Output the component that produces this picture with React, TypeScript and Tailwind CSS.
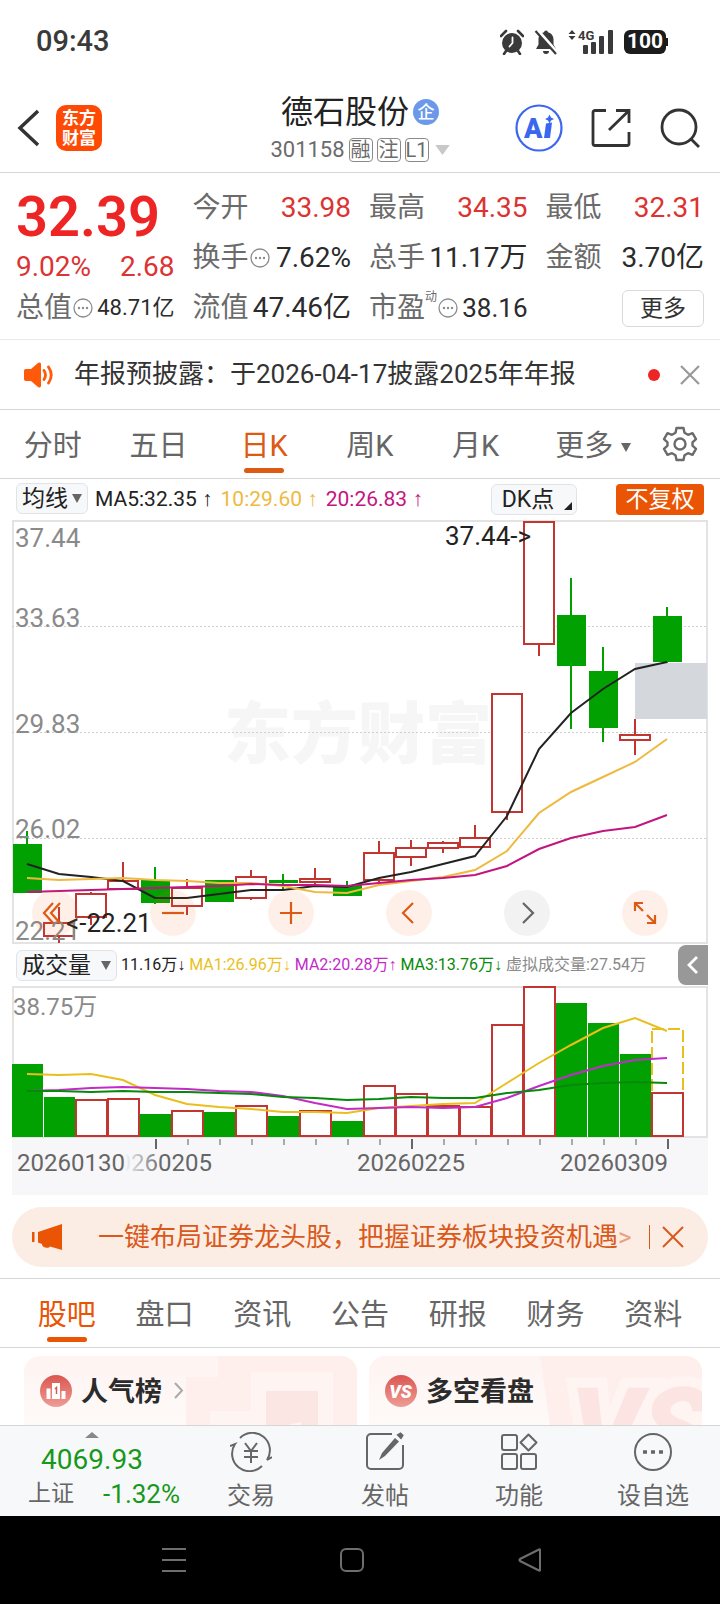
import { useState } from 'react'
import type { ReactNode } from 'react'
import clsx from 'clsx'

type Candle = { up: boolean; top: number; bottom: number; high: number; low: number }

const c = (up: boolean, top: number, bottom: number, high: number, low: number): Candle => ({
  up,
  top,
  bottom,
  high,
  low
})

const STEP = 32
const cx = (i: number) => 15 + STEP * i

const candles: Candle[] = [
  c(false, 325, 372, 311, 372),
  c(true, 403, 416, 387, 423),
  c(true, 374, 397, 372, 405),
  c(true, 361, 369, 342, 369),
  c(false, 361, 382, 347, 384),
  c(true, 368, 386, 359, 395),
  c(false, 361, 381, 361, 382),
  c(true, 357, 378, 350, 380),
  c(false, 361, 362, 354, 370),
  c(true, 359, 362, 348, 365),
  c(false, 366, 375, 361, 376),
  c(true, 333, 360, 321, 362),
  c(true, 328, 337, 320, 346),
  c(true, 323, 328, 321, 333),
  c(true, 318, 327, 305, 327),
  c(true, 174, 292, 174, 300),
  c(true, 2, 124, 2, 136),
  c(false, 96, 145, 58, 209),
  c(false, 152, 207, 127, 222),
  c(true, 215, 220, 199, 235),
  c(false, 97, 141, 87, 143)
]

const priceLines = [
  { color: '#222222', ys: [344, 354, 357, 361, 378, 378, 374, 370, 370, 366, 367, 358, 352, 344, 336, 296, 229, 193, 169, 149, 142] },
  { color: '#efb93f', ys: [358, 360, 359, 358, 360, 361, 363, 363, 366, 372, 373, 365, 361, 357, 350, 331, 293, 272, 257, 242, 219] },
  { color: '#c2157f', ys: [372, 371, 370, 369, 368, 367, 366, 364, 365, 365, 366, 363, 360, 358, 355, 346, 329, 318, 311, 307, 295] }
]

const volumes = [78, 111, 114, 113, 128, 125, 126, 120, 130, 125, 135, 100, 108, 120, 121, 39, 1, 17, 37, 68, 107]
const volumeUp = [0, 0, 1, 1, 0, 1, 0, 1, 0, 1, 0, 1, 1, 1, 1, 1, 1, 0, 0, 0, 1]

const volumeLines = [
  { color: '#e9bf1d', ys: [88, 89, 88, 94, 109, 118, 121, 123, 126, 126, 127, 122, 120, 118, 117, 97, 77, 59, 42, 32, 45] },
  { color: '#c22bc8', ys: [105, 104, 102, 101, 102, 103, 105, 106, 110, 117, 123, 122, 121, 122, 121, 112, 100, 89, 80, 74, 72] },
  { color: '#07890b', ys: [105, 105, 106, 105, 106, 106, 107, 108, 111, 112, 114, 113, 111, 112, 112, 107, 104, 99, 97, 96, 97] }
]

const GREEN = '#02a102'
const RED = '#c23531'

const toPoints = (ys: number[]) => ys.map((y, i) => `${cx(i)},${y}`).join(' ')

function StatusBar() {
  return (
    <div className="flex h-[84px] items-center justify-between pr-[54px] pl-9 text-[#3a3a3a]">
      <span className="text-[29px] font-medium">09:43</span>
      <div className="flex items-center gap-2.5">
        <svg width="24" height="26" viewBox="0 0 24 26" fill="currentColor">
          <circle cx="12" cy="14" r="10" />
          <path d="M1 7 6 2M23 7 18 2M6 22l-2 3M18 22l2 3" stroke="currentColor" strokeWidth="2.6" strokeLinecap="round" />
          <path d="M12.500 8.500V14L9.500 17.500" stroke="#fff" strokeWidth="1.800" fill="none" strokeLinecap="round" />
        </svg>
        <svg width="24" height="26" viewBox="0 0 24 26" fill="currentColor">
          <path d="M12 1.500a2 2 0 0 1 2 1.700c3.500.9 5.500 3.800 5.500 7.300v5l2.500 4.500H2l2.500-4.500v-5c0-3.500 2-6.400 5.500-7.300a2 2 0 0 1 2-1.700ZM9 22h6a3 3 0 0 1-6 0Z" />
          <path d="M3 1 23 24" stroke="#fff" strokeWidth="4" />
          <path d="M1.500 2 22 25" stroke="currentColor" strokeWidth="2.200" />
        </svg>
        <svg width="46" height="26" viewBox="0 0 46 26" fill="currentColor">
          <path d="M4 1 7.500 5h-7ZM4 11 .500 7h7Z" />
          <text x="10" y="11" fontSize="13" fontWeight="700">4G</text>
          <rect x="15" y="16" width="5" height="9" rx="1" />
          <rect x="23" y="13" width="5" height="12" rx="1" />
          <rect x="31" y="7" width="5" height="18" rx="1" />
          <rect x="40" y="1" width="5" height="24" rx="1" />
        </svg>
        <span className="relative flex h-6 w-[42px] items-center justify-center rounded-md bg-[#1c1c1c] text-[21px] font-bold text-white">
          100
          <i className="absolute top-2 -right-0.5 h-2 w-0.5 bg-[#1c1c1c]" />
        </span>
      </div>
    </div>
  )
}

function Header() {
  return (
    <header className="grid h-[89px] grid-cols-[1fr_auto_1fr] items-center border-b border-[#d6d6d6] pr-5 pl-4">
      <div className="flex items-center gap-4">
        <button type="button" aria-label="返回">
          <svg width="24" height="38" viewBox="0 0 24 38" fill="none" stroke="#333" strokeWidth="3.500">
            <path d="M22 2 4 19 22 36" />
          </svg>
        </button>
        <a href="#home" className="flex h-[46px] w-[46px] flex-col items-center justify-center rounded-[10px] bg-[#ff4a05] text-[17px] leading-5 font-bold text-white">
          <span>东方</span>
          <span>财富</span>
        </a>
      </div>
      <div className="flex flex-col items-center pt-1 pl-1">
        <h1 className="flex items-center gap-1 text-[32px] leading-9 text-[#222]">
          德石股份
          <span className="flex h-[26px] w-[26px] items-center justify-center rounded-full bg-[#6b98e8] text-[17px] leading-none font-medium text-white">
            企
          </span>
        </h1>
        <div className="flex items-center gap-1 pt-1 text-[22px] leading-8 text-[#6b6b6b]">
          301158
          {['融', '注', 'L1'].map((t) => (
            <span key={t} className="flex h-6 w-6 items-center justify-center rounded-sm border border-[#8a8a8a] text-[20px] leading-none">
              {t}
            </span>
          ))}
          <svg className="ml-0.5" width="15" height="10" viewBox="0 0 16 11" fill="#c8c8c8">
            <path d="M0 0h16L8 11Z" />
          </svg>
        </div>
      </div>
      <div className="flex items-center justify-end gap-7">
        <button type="button" aria-label="Ai">
          <svg width="48" height="48" viewBox="0 0 48 48">
            <circle cx="24" cy="24" r="22.500" fill="none" stroke="#3b66f0" strokeWidth="2.200" />
            <text x="9" y="34" fontSize="27" fontWeight="900" fill="#3b66f0">A</text>
            <path d="m31 19.500 6-1-2 15.500h-6Z" fill="#3b66f0" />
            <path d="m34.500 10.500 1.500 3 3 1.500-3 1.500-1.500 3-1.500-3-3-1.500 3-1.500Z" fill="#3b66f0" />
          </svg>
        </button>
        <button type="button" aria-label="分享">
          <svg width="40" height="40" viewBox="0 0 40 40" fill="none" stroke="#333" strokeWidth="2.800">
            <path d="M15 2.500H4a2 2 0 0 0-2 2v31a2 2 0 0 0 2 2h32a2 2 0 0 0 2-2V24M25 2.500h13V15M38 2.500 18 22" />
          </svg>
        </button>
        <button type="button" aria-label="搜索">
          <svg width="41" height="41" viewBox="0 0 41 41" fill="none" stroke="#333" strokeWidth="2.800">
            <circle cx="20" cy="19" r="17" />
            <path d="m32 31 8 8" />
          </svg>
        </button>
      </div>
    </header>
  )
}

function InfoDots() {
  return (
    <svg width="20" height="20" viewBox="0 0 20 20" fill="#8c8c8c" className="mx-px shrink-0">
      <circle cx="10" cy="10" r="9" fill="none" stroke="#8c8c8c" strokeWidth="1.300" />
      <circle cx="6" cy="10" r="1.200" />
      <circle cx="10" cy="10" r="1.200" />
      <circle cx="14" cy="10" r="1.200" />
    </svg>
  )
}

function Quote({ label, value, red, info, sup, small }: { label: string; value: string; red?: boolean; info?: boolean; sup?: string; small?: boolean }) {
  return (
    <div className="flex items-center whitespace-nowrap">
      <span className="text-[28px] text-[#6b6b6b]">{label}</span>
      {sup && <span className="self-start pt-1.5 text-xs text-[#6b6b6b]">{sup}</span>}
      {info && <InfoDots />}
      <span className={clsx('ml-auto', red ? 'text-[#dc3333]' : 'text-[#2b2b2b]', small ? 'text-[22px]' : sup ? 'text-[26px]' : 'text-[28px]')}>
        {value}
      </span>
    </div>
  )
}

function Quotes() {
  return (
    <section className="grid auto-rows-[50px] grid-cols-4 gap-x-[18px] border-b border-[#e9e9e9] px-4 pt-2.5 pb-1.5 leading-none">
      <div className="row-span-2 flex flex-col">
        <strong className="pt-1 text-[56px] leading-[60px] font-semibold text-[#ee2525]">32.39</strong>
        <div className="flex justify-between text-[28px] leading-10 text-[#dc3333]">
          <span>9.02%</span>
          <span>2.68</span>
        </div>
      </div>
      <Quote label="今开" value="33.98" red />
      <Quote label="最高" value="34.35" red />
      <Quote label="最低" value="32.31" red />
      <Quote label="换手" value="7.62%" info />
      <Quote label="总手" value="11.17万" />
      <Quote label="金额" value="3.70亿" />
      <Quote label="总值" value="48.71亿" info small />
      <Quote label="流值" value="47.46亿" />
      <Quote label="市盈" value="38.16" info sup="动" />
      <div className="flex items-center justify-end">
        <button type="button" className="h-[37px] w-[82px] rounded-md border border-[#d9d9d9] text-[23px] leading-none text-[#333]">
          更多
        </button>
      </div>
    </section>
  )
}

function Notice() {
  return (
    <section className="flex h-[70px] items-center border-b border-[#d6d6d6] pr-5 pl-6">
      <svg width="30" height="26" viewBox="0 0 30 26" fill="#ff5a0a">
        <path d="M2 7h5l7-6c1.500-1 3-.500 3 1.200v21.600c0 1.700-1.500 2.200-3 1.200l-7-6H2C.700 19 0 18.300 0 17V9c0-1.300.700-2 2-2Z" />
        <path d="M20 8.500q3 4.500 0 9M24.500 5q5.500 8 0 16" stroke="#ff5a0a" strokeWidth="2.800" fill="none" strokeLinecap="round" />
      </svg>
      <p className="ml-5 flex-1 text-[26px] text-[#333]">年报预披露：于2026-04-17披露2025年年报</p>
      <i className="mr-5 h-3 w-3 rounded-full bg-[#ee2525]" />
      <button type="button" aria-label="关闭">
        <svg width="20" height="20" stroke="#999" strokeWidth="2.200">
          <path d="m1 1 18 18M19 1 1 19" />
        </svg>
      </button>
    </section>
  )
}

function PeriodTabs() {
  const [active, setActive] = useState('日K')
  return (
    <nav className="grid h-[69px] grid-cols-[repeat(6,minmax(0,1fr))_auto] border-b border-[#d6d6d6] pr-[22px] text-[29px] text-[#666]">
      {['分时', '五日', '日K', '周K', '月K'].map((t) => (
        <button
          key={t}
          type="button"
          onClick={() => setActive(t)}
          className={clsx('relative pt-1.5', active === t && 'text-[#dd5a14]')}
        >
          {t}
          {active === t && <i className="absolute bottom-[5px] left-1/2 h-[5px] w-10 -translate-x-1/2 rounded-sm bg-[#dd5a14]" />}
        </button>
      ))}
      <button type="button" className="flex items-center justify-center gap-2 pt-1.5 pl-6 whitespace-nowrap">
        更多
        <svg width="10" height="9" fill="#666">
          <path d="M0 0h10L5 9Z" />
        </svg>
      </button>
      <button type="button" aria-label="设置" className="ml-7">
        <svg width="36" height="36" viewBox="0 0 36 36" fill="none" stroke="#6b6b6b" strokeWidth="2.400" strokeLinejoin="round">
          <path d="M14.500 2h7l1 4.800 3.500 2 4.500-1.600 3.500 6-3.500 3.200v3.200l3.500 3.200-3.500 6-4.500-1.600-3.500 2-1 4.800h-7l-1-4.800-3.500-2-4.500 1.600-3.500-6 3.500-3.200v-3.200L2 13.200l3.500-6L10 8.800l3.500-2Z" />
          <circle cx="18" cy="18" r="5.500" />
        </svg>
      </button>
    </nav>
  )
}

function PickBox({ label, options, className }: { label: string; options: string[]; className: string }) {
  return (
    <div className="relative">
      <select aria-label={label} className={clsx('h-[31px] appearance-none rounded-md border border-[#e0e3e8] bg-[#f7f8fa] pl-[5px] text-[#222]', className)}>
        {options.map((o) => (
          <option key={o}>{o}</option>
        ))}
      </select>
      <svg className="pointer-events-none absolute top-[11px] right-1.5" width="10" height="9" fill="#666">
        <path d="M0 0h10L5 9Z" />
      </svg>
    </div>
  )
}

const Arrow = ({ children }: { children: string }) => (
  <span className="font-['Liberation_Sans',sans-serif]">{children}</span>
)

function PriceLegend() {
  return (
    <div className="flex h-[41px] items-center px-4 text-[21px] whitespace-nowrap">
      <PickBox label="指标" options={['均线']} className="w-[72px] text-[23px] leading-none" />
      <span className="ml-[7px] text-[#222]">MA5:32.35 <Arrow>↑</Arrow></span>
      <span className="ml-2 text-[#efb93f]">10:29.60 <Arrow>↑</Arrow></span>
      <span className="ml-2 text-[#c2157f]">20:26.83 <Arrow>↑</Arrow></span>
      <button type="button" className="relative mr-[39px] ml-auto h-[31px] w-[86px] rounded-md border border-[#e0e3e8] bg-[#f7f8fa] pr-3 text-[23px] leading-none text-[#222]">
        DK点
        <svg className="absolute right-1 bottom-1" width="8" height="8" fill="#222">
          <path d="M8 0v8H0Z" />
        </svg>
      </button>
      <button type="button" className="h-[31px] w-[88px] rounded-sm bg-[#e95504] text-[23px] leading-none text-white">不复权</button>
    </div>
  )
}

const chartTools: { name: string; gray?: boolean; icon: ReactNode }[] = [
  { name: '最左', icon: <path d="M21 13 12 23l9 10M28 13l-9 10 9 10" /> },
  { name: '缩小', icon: <path d="M12 23h22" /> },
  { name: '放大', icon: <path d="M12 23h22M23 12v22" /> },
  { name: '左移', icon: <path d="M27 13 17 23l10 10" /> },
  { name: '右移', gray: true, icon: <path d="m19 13 10 10-10 10" /> },
  { name: '全屏', icon: <path d="M21 21l-8-8M13 21v-8h8M25 25l8 8M33 25v8h-8" /> }
]

function PriceChart() {
  return (
    <div className="relative px-3">
      <svg viewBox="0 0 696 424" className="block w-full" fontSize="26">
        <rect x="1" y="1" width="694" height="422" fill="#fff" stroke="#e3e3e3" strokeWidth="2" />
        <text x="212" y="238" fontSize="67" fontWeight="900" fill="#f6f6f6">东方财富</text>
        {[106.5, 212.5, 318.5].map((y) => (
          <line key={y} x1="0" x2="696" y1={y} y2={y} stroke="#cfcfcf" strokeDasharray="2 2" />
        ))}
        <rect x="623" y="143" width="72" height="56" fill="#d4d7dc" />
        {candles.map((k, i) => (
          <g key={i} stroke={k.up ? RED : GREEN} strokeWidth="2">
            <line x1={cx(i)} x2={cx(i)} y1={k.high} y2={k.low} />
            <rect x={cx(i) - (k.up ? 15 : 13)} y={k.top} width={k.up ? 30 : 27} height={k.bottom - k.top} fill={k.up ? '#fff' : GREEN} />
          </g>
        ))}
        <g fill="#8a8a8a">
          <text x="3" y="27">37.44</text>
          <text x="3" y="107">33.63</text>
          <text x="3" y="213">29.83</text>
          <text x="3" y="318">26.02</text>
          <text x="3" y="420">22.21</text>
        </g>
        {priceLines.map((l) => (
          <polyline key={l.color} points={toPoints(l.ys)} fill="none" stroke={l.color} strokeWidth="2" />
        ))}
        <g fill="#222">
          <text x="433" y="25">37.44-&gt;</text>
          <text x="54" y="412">&lt;-22.21</text>
        </g>
      </svg>
      <div className="absolute right-[52px] bottom-2 left-8 flex justify-between">
        {chartTools.map((t) => (
          <button key={t.name} type="button" aria-label={t.name} className={clsx('rounded-full', t.gray ? 'bg-black/5 text-[#666]' : 'bg-[#f26a1b]/10 text-[#dd5a14]')}>
            <svg width="46" height="46" fill="none" stroke="currentColor" strokeWidth="2.200">
              {t.icon}
            </svg>
          </button>
        ))}
      </div>
    </div>
  )
}

function VolumeLegend() {
  return (
    <div className="flex h-[42px] items-center pl-4 text-base whitespace-nowrap">
      <PickBox label="副图指标" options={['成交量']} className="w-[101px] text-[23px] leading-none" />
      <span className="ml-1 text-[#222]">11.16万<Arrow>↓</Arrow></span>
      <span className="ml-1 text-[#e9bf1d]">MA1:26.96万<Arrow>↓</Arrow></span>
      <span className="ml-1 text-[#c22bc8]">MA2:20.28万<Arrow>↑</Arrow></span>
      <span className="ml-1 text-[#07890b]">MA3:13.76万<Arrow>↓</Arrow></span>
      <span className="ml-1 text-[#8a8a8a]">虚拟成交量:27.54万</span>
      <button type="button" aria-label="展开" className="mr-3 ml-auto flex h-10 w-[30px] items-center justify-center rounded-l-lg bg-[#989898]">
        <svg width="12" height="18" fill="none" stroke="#fff" strokeWidth="2.800">
          <path d="M10 1 2 9l8 8" />
        </svg>
      </button>
    </div>
  )
}

function VolumeChart() {
  return (
    <div className="px-3">
      <svg viewBox="0 0 696 209" className="block w-full" fontSize="24">
        <defs>
          <linearGradient id="fade">
            <stop offset="0.750" stopColor="#f7f7fa" />
            <stop offset="1" stopColor="#f7f7fa" stopOpacity="0" />
          </linearGradient>
        </defs>
        <rect x="1" y="1" width="694" height="150" fill="#fff" stroke="#e3e3e3" strokeWidth="2" />
        <text x="1" y="29" fill="#8a8a8a">38.75万</text>
        <rect x="640" y="43" width="31" height="64" fill="none" stroke="#e9bf1d" strokeWidth="2" strokeDasharray="12 4" />
        {volumes.map((top, i) =>
          volumeUp[i] ? (
            <rect key={i} x={cx(i) - 15} y={top} width="31" height={150 - top} fill="#fff" stroke={RED} strokeWidth="2" />
          ) : (
            <rect key={i} x={cx(i) - 15} y={top} width="31" height={151 - top} fill={GREEN} />
          )
        )}
        {volumeLines.map((l) => (
          <polyline key={l.color} points={toPoints(l.ys)} fill="none" stroke={l.color} strokeWidth="2" />
        ))}
        <rect y="152" width="696" height="57" fill="#f7f7fa" />
        {candles.map(
          (_, i) =>
            i >= 4 && (
              <line key={i} x1={cx(i) + 1} x2={cx(i) + 1} y1="153" y2={i % 8 === 4 ? 163 : 159} stroke={i % 8 === 4 ? '#666' : '#aaa'} strokeWidth="2" />
            )
        )}
        <g fill="#666">
          <text x="92" y="185">20260205</text>
          <rect y="165" width="150" height="24" fill="url(#fade)" />
          <text x="5" y="185">20260130</text>
          <text x="345" y="185">20260225</text>
          <text x="656" y="185" textAnchor="end">20260309</text>
        </g>
      </svg>
    </div>
  )
}

function Banner() {
  return (
    <div className="mx-3 mt-3 mb-[11px] flex h-[60px] items-center rounded-full bg-[#fcede4] pr-6 pl-5 text-[#d9591a]">
      <svg width="30" height="28" viewBox="0 0 30 28" fill="#e95504">
        <path d="M0 9h2.500v10H0ZM6 9 30 1v26l-12-3.500c-1 2.500-8 1.500-8-2.500l-4-1.500Z" />
      </svg>
      <a href="#promo" className="ml-9 text-[26px] whitespace-nowrap">
        一键布局证券龙头股，把握证券板块投资机遇<span className="opacity-50">&gt;</span>
      </a>
      <i className="mr-3 ml-auto h-6 w-px bg-[#d9591a]" />
      <button type="button" aria-label="关闭">
        <svg width="22" height="22" stroke="#d9591a" strokeWidth="2">
          <path d="m1 1 20 20M21 1 1 21" />
        </svg>
      </button>
    </div>
  )
}

function SectionTabs() {
  const [active, setActive] = useState('股吧')
  return (
    <nav className="flex h-[70px] items-stretch border-y border-[#d6d6d6] px-[18px] text-[29px] text-[#666]">
      {['股吧', '盘口', '资讯', '公告', '研报', '财务', '资料'].map((t) => (
        <button
          key={t}
          type="button"
          onClick={() => setActive(t)}
          className={clsx('relative flex-1 pt-1.5', active === t && 'text-[#e95504]')}
        >
          {t}
          {active === t && <i className="absolute bottom-[5px] left-1/2 h-[5px] w-10 -translate-x-1/2 rounded-sm bg-[#e95504]" />}
        </button>
      ))}
    </nav>
  )
}

function Cards() {
  return (
    <section className="grid grid-cols-2 gap-3 pt-2 pr-[18px] pl-6">
      <a href="#rank" className="relative flex h-[69px] items-center overflow-hidden rounded-t-2xl bg-linear-to-b from-[#fef4f2] to-[#fefaf8] pl-4 text-[27px] font-bold text-[#2b2b2b]">
        <svg className="absolute right-0 bottom-0" width="171" height="69">
          <path d="M32 0h139v69H0V21h32Z" fill="#feefed" />
          <path d="M24 69V55h41V16h82v53Z" fill="#fef5f3" />
          <path d="M80 69V35h52v34Z" fill="#fce6e4" />
          <path d="m102 69 13-3v3Z" fill="#fef5f3" />
        </svg>
        <svg width="32" height="32" viewBox="0 0 32 32" fill="#fff">
          <defs>
            <linearGradient id="badge" x1="0" y1="0" x2="0" y2="1">
              <stop stopColor="#da5650" />
              <stop offset="1" stopColor="#ef9c96" />
            </linearGradient>
          </defs>
          <circle cx="16" cy="16" r="16" fill="url(#badge)" />
          <path d="M6.500 13.500h4v10.500h-4ZM12 8h8v16h-8ZM21.500 16h4v8h-4Z" />
          <path d="m15 14 1.500-1.500V19" stroke="#da5650" strokeWidth="1.500" fill="none" />
        </svg>
        <span className="relative ml-[9px] pt-1">人气榜</span>
        <svg className="ml-3" width="10" height="17" fill="none" stroke="#aaa" strokeWidth="2">
          <path d="m1 1 7 7.500L1 16" />
        </svg>
      </a>
      <a href="#vote" className="relative flex h-[69px] items-center overflow-hidden rounded-t-2xl bg-linear-to-b from-[#fef4f2] to-[#fefaf8] pl-4 text-[27px] font-bold text-[#2b2b2b]">
        <svg className="absolute right-0 bottom-0" width="162" height="69">
          <path d="M0 0h162v69H10Z" fill="#feefed" />
          <text x="30" y="112" fontSize="112" fontWeight="900" fontStyle="italic" fill="#fce4e2" stroke="#fef4f2" strokeWidth="20" paintOrder="stroke">VS</text>
        </svg>
        <svg width="32" height="32" viewBox="0 0 32 32">
          <circle cx="16" cy="16" r="16" fill="url(#badge)" />
          <text x="15.500" y="22.500" fontSize="18" fontWeight="900" fontStyle="italic" fill="#fff" textAnchor="middle">VS</text>
        </svg>
        <span className="relative ml-[9px] pt-1">多空看盘</span>
      </a>
    </section>
  )
}

const bottomItems: { label: string; icon: ReactNode }[] = [
  {
    label: '交易',
    icon: (
      <>
        <path d="M10 6A17.500 17.500 0 0 1 37 28l5-3M32 34A17.500 17.500 0 0 1 5 12L0 14" />
        <path d="m15 11 6 8 6-8M14 19h14M14 25h14M21 19v12" />
      </>
    )
  },
  {
    label: '发帖',
    icon: (
      <>
        <path d="M28 2H7a4 4 0 0 0-4 4v27a4 4 0 0 0 4 4h28a4 4 0 0 0 4-4V13" />
        <path d="m37 6-3-3 2.500-1.500 2 2Z" fill="currentColor" />
        <path d="m31 6 4 3.500L21 24l-6 4 3-7Z" fill="currentColor" stroke="none" />
      </>
    )
  },
  {
    label: '功能',
    icon: (
      <>
        <rect x="4" y="3" width="15" height="15" rx="2" />
        <rect x="4" y="22" width="15" height="15" rx="2" />
        <rect x="23" y="22" width="15" height="15" rx="2" />
        <path d="m30.500 2.500 8 8-8 8-8-8Z" strokeLinejoin="round" />
      </>
    )
  },
  {
    label: '设自选',
    icon: (
      <>
        <circle cx="21" cy="20" r="18" />
        <path d="M11 20h4M19 20h4M27 20h4" strokeWidth="3.500" />
      </>
    )
  }
]

function BottomBar() {
  return (
    <footer className="grid h-[91px] grid-cols-[184px_1fr_1fr_1fr_1fr] border-t border-[#d6d6d6] bg-[#f7f8fa] text-[#666]">
      <a href="#index" className="flex flex-col items-center pt-[6px] leading-none text-[#18981a]">
        <svg width="14" height="6" fill="#888">
          <path d="M7 0 14 6H0Z" />
        </svg>
        <span className="pt-1.5 text-[28px] leading-8">4069.93</span>
        <span className="flex w-full items-center justify-between pr-1 pl-7 text-[26px] leading-9">
          <span className="text-[23px] text-[#666]">上证</span>-1.32%
        </span>
      </a>
      {bottomItems.map((b) => (
        <button key={b.label} type="button" className="flex flex-col items-center justify-start pt-1.5 text-2xl">
          <svg width="42" height="40" fill="none" stroke="currentColor" strokeWidth="2">
            {b.icon}
          </svg>
          <span className="pt-2 leading-8">{b.label}</span>
        </button>
      ))}
    </footer>
  )
}

function SystemNav() {
  return (
    <div className="flex h-[88px] items-center justify-between bg-black px-[162px]">
      <button type="button" aria-label="最近任务">
        <svg width="24" height="24" stroke="#6e6e6e" strokeWidth="2">
          <path d="M0 1h24M0 12h24M0 23h24" />
        </svg>
      </button>
      <button type="button" aria-label="主屏幕">
        <svg width="24" height="24" fill="none" stroke="#6e6e6e" strokeWidth="2">
          <rect x="1" y="1" width="22" height="22" rx="5" />
        </svg>
      </button>
      <button type="button" aria-label="后退" className="mr-4">
        <svg width="24" height="24" fill="none" stroke="#6e6e6e" strokeWidth="2" strokeLinejoin="round">
          <path d="M22 2v20q0 1-1 .500L2 13q-1-1 0-2L21 1.500q1-.500 1 .500Z" />
        </svg>
      </button>
    </div>
  )
}

export default function App() {
  return (
    <div className="min-h-screen bg-white font-[Roboto,'Noto_Sans_CJK_SC',sans-serif]">
      <StatusBar />
      <Header />
      <main>
        <Quotes />
        <Notice />
        <PeriodTabs />
        <PriceLegend />
        <PriceChart />
        <VolumeLegend />
        <VolumeChart />
        <Banner />
        <SectionTabs />
        <Cards />
      </main>
      <BottomBar />
      <SystemNav />
    </div>
  )
}
